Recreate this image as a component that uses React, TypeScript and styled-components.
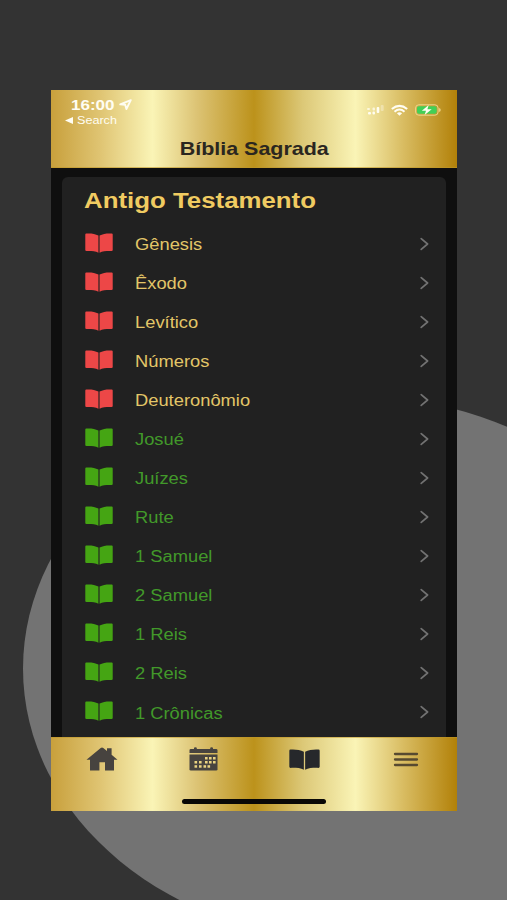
import React from "react";
import styled, { createGlobalStyle } from "styled-components";

const GlobalStyle = createGlobalStyle`
  * { box-sizing: border-box; }
  html, body { margin: 0; padding: 0; background: #333333; }
  body { overflow: hidden; font-family: "Liberation Sans", Arial, sans-serif; }
  svg { display: block; flex: none; overflow: visible; }
`;

const gold =
  "linear-gradient(to right, #c8a03c 0%, #dfc472 12%, #faf4b6 25%, #dcc374 36%, #bc921b 50%, #dcc877 62%, #faf4b6 75%, #d8bb60 87%, #b28109 100%)";

const Page = styled.div`
  position: relative;
  width: 507px;
  height: 900px;
  overflow: hidden;
  background: #333333;
  padding: 90px 50px 0 51px;
`;

const Backdrop = styled.div`
  position: absolute;
  left: 23px;
  top: 396px;
  width: 662px;
  height: 545px;
  border-radius: 50%;
  background: #737373;
`;

const Phone = styled.main`
  position: relative;
  display: flex;
  flex-direction: column;
  height: 721px;
  background: #0f0f0f;
`;

const Header = styled.header`
  display: flex;
  flex-direction: column;
  flex: none;
  height: 78px;
  background: ${gold};
  border-bottom: 1px solid rgba(190, 150, 40, 0.6);
`;

const StatusBar = styled.div`
  display: flex;
  justify-content: space-between;
  height: 46px;
  padding: 7px 16px 0 14px;
  color: #fffdf2;
`;

const StatusLeft = styled.div`
  display: flex;
  flex-direction: column;
`;

const ClockLine = styled.div`
  display: flex;
  align-items: center;
  gap: 4px;
  height: 15px;
  padding-left: 6px;
`;

const BackLine = styled.div`
  display: flex;
  align-items: center;
  gap: 4px;
  height: 17px;
`;

const StatusIcons = styled.div`
  display: flex;
  align-items: center;
  height: 26px;
  gap: 7px;
`;

const Stretch = styled.span<{ $size: number; $scale: number; $bold?: boolean; $center?: boolean }>`
  display: inline-block;
  font-size: ${(p) => p.$size}px;
  font-weight: ${(p) => (p.$bold ? 700 : 400)};
  line-height: 1.15;
  white-space: nowrap;
  transform: scaleX(${(p) => p.$scale});
  transform-origin: ${(p) => (p.$center ? "center" : "left")} center;
`;

const ClockSlot = styled.div`
  width: 44px;
`;

const Title = styled.h1`
  display: flex;
  justify-content: center;
  margin: 0;
  padding-top: 2px;
  color: #2a261f;
`;

const Content = styled.section`
  flex: 1;
  min-height: 0;
  overflow: hidden;
  padding: 9px 11px 0 11px;
`;

const Card = styled.div`
  height: 100%;
  border-radius: 6px 6px 0 0;
  background: #212121;
`;

const CardTitle = styled.h2`
  display: flex;
  align-items: center;
  height: 47px;
  margin: 0;
  padding: 0 0 0 22px;
  color: #f0cb61;
`;

const List = styled.ul`
  margin: 0;
  padding: 0;
  list-style: none;
`;

const Row = styled.li<{ $read: boolean }>`
  display: grid;
  grid-template-columns: 50px 1fr 9px;
  align-items: center;
  height: 39.08px;
  padding: 0 17px 0 23px;
  color: ${(p) => (p.$read ? "#42992a" : "#e3c668")};
`;

const BookName = styled.div`
  display: flex;
  padding-top: 2px;
`;

const BookMark = styled.div`
  padding-bottom: 2px;
`;

const TabBar = styled.nav`
  display: flex;
  flex-direction: column;
  align-items: center;
  flex: none;
  height: 74px;
  background: ${gold};
  border-top: 1px solid rgba(190, 150, 40, 0.55);
`;

const Tabs = styled.div`
  display: grid;
  grid-template-columns: repeat(4, 1fr);
  justify-items: center;
  align-items: center;
  width: 100%;
  height: 42px;
`;

const HomeIndicator = styled.div`
  width: 144px;
  height: 5px;
  margin: 19px 0 0 0;
  border-radius: 3px;
  background: #090806;
`;

const BookIcon = ({ color, width, height }: { color: string; width: number; height: number }) => (
  <svg width={width} height={height} viewBox="0 0 29 20" preserveAspectRatio="none" fill={color}>
    <path d="M1.4.5C6 .2 10.5.8 13.9 2.5V19.7C10.5 18 6 17.9 1.5 18Q.3 18 .3 16.9V1.6Q.3.6 1.4.5Z" />
    <path d="M27.6.5C23 .2 18.5.8 15.1 2.5V19.7C18.5 18 23 17.9 27.5 18Q28.7 18 28.7 16.9V1.6Q28.7.6 27.6.5Z" />
  </svg>
);

const Chevron = () => (
  <svg width="9" height="14" viewBox="0 0 9 14" fill="none" stroke="#727272" strokeWidth="1.7" strokeLinecap="round" strokeLinejoin="round">
    <path d="M1.2 1.6L7.6 7L1.2 12.4" />
  </svg>
);

const LocationIcon = () => (
  <svg width="13" height="11" viewBox="0 0 13 11" fill="none" stroke="currentColor" strokeWidth="1.9" strokeLinejoin="round">
    <path d="M11.8 1.1L1.2 5.4L6.2 5.8L7.4 10.1Z" />
  </svg>
);

const BackArrow = () => (
  <svg width="8" height="7" viewBox="0 0 8 7" fill="currentColor">
    <path d="M0 3.5L8 0V7Z" />
  </svg>
);

const SignalIcon = () => (
  <svg width="17" height="10" viewBox="0 0 17 10" fill="currentColor">
    <rect x="0" y="3" width="3" height="2" rx="1" opacity=".75" />
    <rect x="1" y="7" width="3" height="2.5" rx="1" />
    <rect x="5.5" y="2.5" width="2.5" height="3" rx="1" opacity=".75" />
    <rect x="5.5" y="6.5" width="2.5" height="3" rx="1" />
    <rect x="9.7" y="2" width="2.6" height="6" rx="1" />
    <rect x="13.7" y="0" width="3" height="6" rx="1" opacity=".35" />
  </svg>
);

const WifiIcon = () => (
  <svg width="17" height="11" viewBox="0 0 17 11" fill="none" stroke="currentColor" strokeWidth="2">
    <path d="M.8 4Q8.5-2.2 16.2 4" />
    <path d="M3.5 6.7Q8.5 2.4 13.5 6.7" />
    <path d="M5.9 8.2Q8.5 6.2 11.1 8.2L8.5 10.7Z" fill="currentColor" stroke="none" />
  </svg>
);

const BatteryIcon = () => (
  <svg width="26" height="12" viewBox="0 0 26 12">
    <rect x=".6" y=".8" width="22.5" height="10.4" rx="3.2" fill="none" stroke="#eed58a" strokeWidth="1" />
    <rect x="2" y="2.2" width="19.7" height="7.6" rx="1.8" fill="#42cf56" />
    <path d="M24.2 4V8Q25.7 7.4 25.7 6T24.2 4Z" fill="#f0d98f" />
    <path d="M13.7 1L6.8 6.7H11L9.6 11L16.7 5.2H12.4Z" fill="#fffdf0" />
  </svg>
);

const HomeIcon = () => (
  <svg width="32" height="24" viewBox="0 0 32 24" fill="#47433f">
    <path d="M.5 12.8L14.7 1Q16 0 17.3 1L21 4V1.2H25.6V7.8L31.5 12.8H28V23.5H19V15.2H13.4V23.5H4V12.8Z" />
  </svg>
);

const calendarDots: [number, number][] = [
  [16, 10], [20, 10], [24, 10],
  [5.5, 14], [10, 14], [16, 14], [20, 14], [24, 14],
  [5.5, 18.2], [10, 18.2], [14.5, 18.2], [18.5, 18.2],
];

const CalendarIcon = () => (
  <svg width="29" height="24" viewBox="0 0 29 24">
    <path d="M.5 3.3Q.5 2 1.8 2H5V1Q5 .2 6.4.2T7.8 1V2H21.2V1Q21.2.2 22.6.2T24 1V2H27.2Q28.5 2 28.5 3.3V6H.5Z" fill="#47433f" />
    <path d="M.5 7.5H28.5V22.2Q28.5 23.5 27.2 23.5H1.8Q.5 23.5.5 22.2Z" fill="#47433f" />
    {calendarDots.map(([x, y]) => (
      <rect key={`${x}-${y}`} x={x} y={y} width="2.6" height="2.5" fill="#ead381" />
    ))}
  </svg>
);

const MenuIcon = () => (
  <svg width="24" height="15" viewBox="0 0 24 15" fill="none" stroke="#574a30" strokeWidth="2.3" strokeLinecap="round">
    <path d="M1 2H23M1 7.5H23M1 13H23" />
  </svg>
);

const books = [
  { name: "Gênesis", read: false },
  { name: "Êxodo", read: false },
  { name: "Levítico", read: false },
  { name: "Números", read: false },
  { name: "Deuteronômio", read: false },
  { name: "Josué", read: true },
  { name: "Juízes", read: true },
  { name: "Rute", read: true },
  { name: "1 Samuel", read: true },
  { name: "2 Samuel", read: true },
  { name: "1 Reis", read: true },
  { name: "2 Reis", read: true },
  { name: "1 Crônicas", read: true },
];

export default function App() {
  return (
    <Page>
      <GlobalStyle />
      <Backdrop />
      <Phone>
        <Header>
          <StatusBar>
            <StatusLeft>
              <ClockLine>
                <ClockSlot>
                  <Stretch $size={14.2} $scale={1.2} $bold>16:00</Stretch>
                </ClockSlot>
                <LocationIcon />
              </ClockLine>
              <BackLine>
                <BackArrow />
                <Stretch $size={10} $scale={1.26}>Search</Stretch>
              </BackLine>
            </StatusLeft>
            <StatusIcons>
              <SignalIcon />
              <WifiIcon />
              <BatteryIcon />
            </StatusIcons>
          </StatusBar>
          <Title>
            <Stretch $size={18.5} $scale={1.16} $bold $center>Bíblia Sagrada</Stretch>
          </Title>
        </Header>
        <Content>
          <Card>
            <CardTitle>
              <Stretch $size={21.8} $scale={1.185} $bold>Antigo Testamento</Stretch>
            </CardTitle>
            <List>
              {books.map((book) => (
                <Row key={book.name} $read={book.read}>
                  <BookMark>
                    <BookIcon color={book.read ? "#45a513" : "#ed4747"} width={28} height={20} />
                  </BookMark>
                  <BookName>
                    <Stretch $size={15.6} $scale={1.175}>{book.name}</Stretch>
                  </BookName>
                  <Chevron />
                </Row>
              ))}
            </List>
          </Card>
        </Content>
        <TabBar>
          <Tabs>
            <HomeIcon />
            <CalendarIcon />
            <BookIcon color="#26282b" width={31} height={21} />
            <MenuIcon />
          </Tabs>
          <HomeIndicator />
        </TabBar>
      </Phone>
    </Page>
  );
}
